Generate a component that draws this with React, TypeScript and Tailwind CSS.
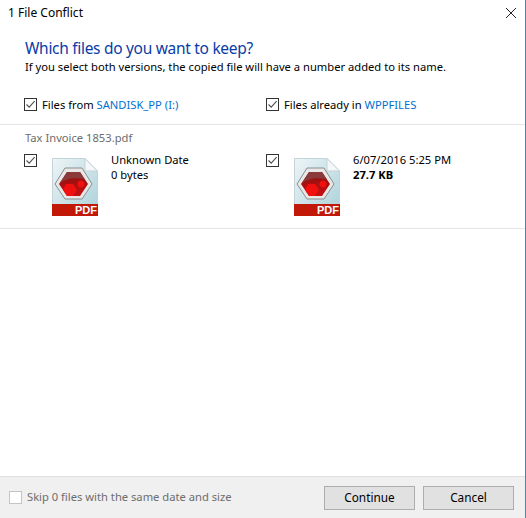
const Check = () => (
  <span className="flex h-[13px] w-[13px] shrink-0 items-center justify-center border border-[#333333] bg-white">
    <svg width="11" height="11" viewBox="0 0 11 11" fill="none">
      <path d="M1.5 5.5 L4.2 8.2 L9.6 2.2" stroke="#555555" strokeWidth="1.2" />
    </svg>
  </span>
);

const PdfIcon = ({ id }: { id: string }) => (
  <svg width="46" height="58" viewBox="0 0 46 58" className="shrink-0">
    <defs>
      <linearGradient id={`p${id}`} x1="0" y1="0" x2="1" y2="1">
        <stop offset="0" stopColor="#eef5f7" />
        <stop offset="1" stopColor="#a9d0d9" />
      </linearGradient>
      <linearGradient id={`r${id}`} x1="0" y1="0" x2="0" y2="1">
        <stop offset="0" stopColor="#8c1111" />
        <stop offset="1" stopColor="#c80f0f" />
      </linearGradient>
    </defs>
    <path d="M0.5 0.5 H33 L45.5 13 V57.5 H0.5 Z" fill={`url(#p${id})`} stroke="#c3d3d8" />
    <path d="M33 0.5 V13 H45.5 Z" fill="#f4f8f9" stroke="#c3d3d8" />
    <path d="M13 10 H30 L40 26 L30 41 H13 L3 26 Z" fill="#e8e8e8" stroke="#8d8d8d" />
    <path d="M15 14 H28 L36 26 L28 38 H15 L7 26 Z" fill={`url(#r${id})`} />
    <path d="M8 25 L15 14 H28 L33 21.500 C24 19 15 20 8 25 Z" fill="#8a3a3a" />
    <path d="M14 26 H21 L25 32 L21 38 H15 L11 32 Z" fill="#f01010" />
    <circle cx="29" cy="26" r="3.500" fill="#f01010" />
    <rect x="0" y="46" width="46" height="12" fill="#c21807" />
    <text x="45" y="56" textAnchor="end" fill="#ffffff" fontFamily="'Liberation Sans', sans-serif" fontSize="11" fontWeight="700">PDF</text>
  </svg>
);

const FileCol = ({ id, date, size, bold }: { id: string; date: string; size: string; bold?: boolean }) => (
  <div className="flex">
    <div className="w-[28px] pt-[1px]"><Check /></div>
    <div className="pt-[5px]"><PdfIcon id={id} /></div>
    <div className="-mt-[1px] ml-[13px] leading-[15px] text-black">
      <div>{date}</div>
      <div className={bold ? "font-bold" : ""}>{size}</div>
    </div>
  </div>
);

export default function App() {
  return (
    <div className="flex h-[518px] w-[526px] flex-col border-r border-[#2b90c8] bg-white font-['Noto_Sans','Open_Sans',sans-serif] text-[11.2px] text-[#1a1a1a]">
      <header className="flex h-[25px] items-center justify-between pl-2 pr-[8px]">
        <span className="text-[12px] text-black">1 File Conflict</span>
        <svg width="12" height="12" viewBox="0 0 12 12" fill="none">
          <path d="M1 1 L11 11 M11 1 L1 11" stroke="#222222" strokeWidth="1" />
        </svg>
      </header>

      <div className="px-[25px] pt-[12px]">
        <h1 className="text-[15.5px] leading-[22px] tracking-[-0.3px] text-[#0a3ca6]">Which files do you want to keep?</h1>
        <p className="leading-[16px] text-black">If you select both versions, the copied file will have a number added to its name.</p>
      </div>

      <div className="grid grid-cols-[242px_1fr] border-b border-[#e5e5e5] pb-[13px] pl-[24px] pt-[23px]">
        <label className="flex h-[13px] items-center gap-[5px]">
          <Check />
          <span className="pt-[2px] text-black">Files from <span className="text-[#0070d0]">SANDISK_PP (I:)</span></span>
        </label>
        <label className="flex h-[13px] items-center gap-[5px]">
          <Check />
          <span className="pt-[2px] text-black">Files already in <span className="text-[#0070d0]">WPPFILES</span></span>
        </label>
      </div>

      <div className="border-b border-[#e5e5e5] pb-[12px] pl-[24px] pt-[4px]">
        <div className="h-[24px] pl-[1px] leading-[17px] text-[#6d6d6d]">Tax Invoice 1853.pdf</div>
        <div className="grid grid-cols-[242px_1fr]">
          <FileCol id="a" date="Unknown Date" size="0 bytes" />
          <FileCol id="b" date="6/07/2016 5:25 PM" size="27.7 KB" bold />
        </div>
      </div>

      <div className="flex-1" />

      <footer className="flex h-[42px] items-center justify-between border-t border-[#dfdfdf] bg-[#f0f0f0] pl-[9px] pr-[11px]">
        <label className="flex items-center gap-[5px] text-[#6d6d6d]">
          <span className="h-[13px] w-[13px] border border-[#c4c4c4] bg-white" />
          Skip 0 files with the same date and size
        </label>
        <div className="flex gap-2">
          <button className="h-[24px] w-[91px] border border-[#adadad] bg-[#e1e1e1] text-[11.8px] text-black">Continue</button>
          <button className="h-[24px] w-[91px] border border-[#adadad] bg-[#e1e1e1] text-[11.8px] text-black">Cancel</button>
        </div>
      </footer>
    </div>
  );
}
